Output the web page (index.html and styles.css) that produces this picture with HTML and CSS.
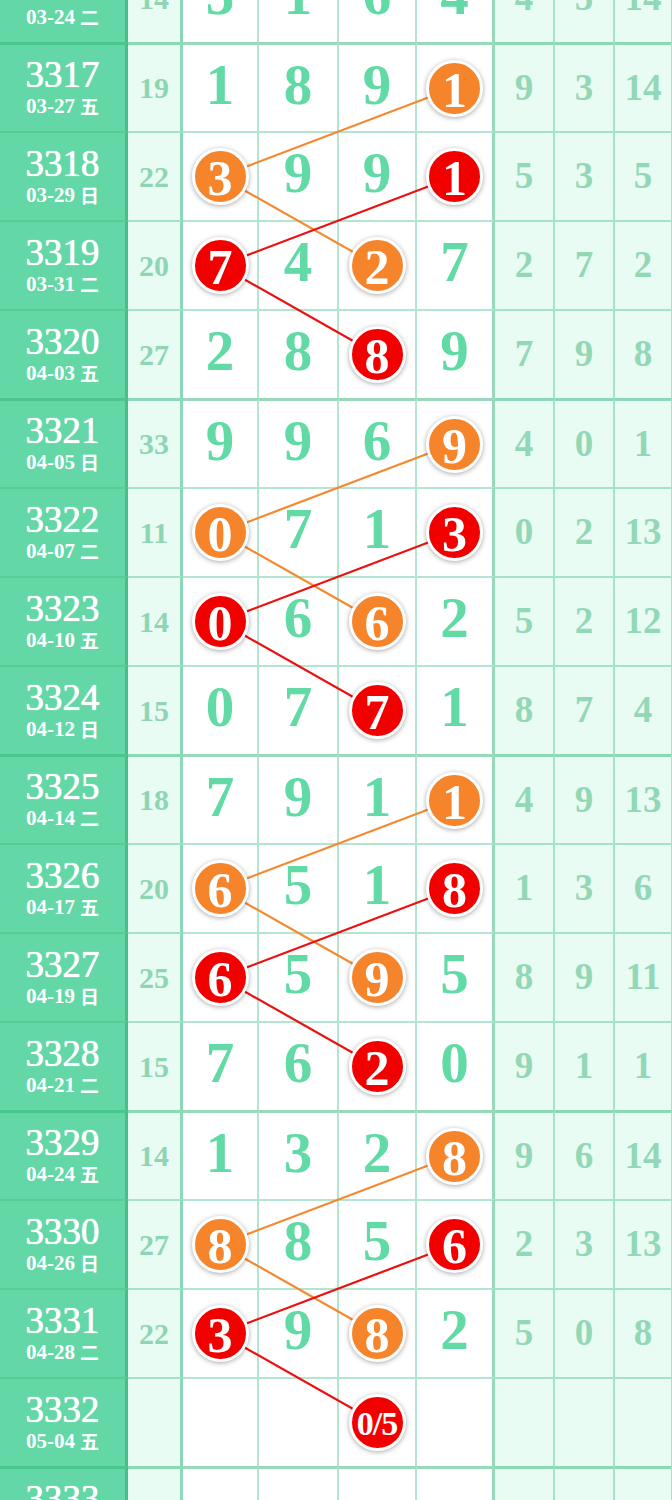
FILE: index.html
```html
<!DOCTYPE html>
<html lang="zh">
<head>
<meta charset="utf-8">
<title>走势图</title>
<link rel="stylesheet" href="styles.css">
</head>
<body>
<div class="chart">
  <svg class="links" width="672" height="1602" viewBox="0 0 672 1602">
    <polyline class="lo" points="454.5,134.5 220,223.5 377,312.5"/>
    <polyline class="lr" points="454.5,223.5 220,312.5 377,401.5"/>
    <polyline class="lo" points="454.5,490.5 220,579.5 377,668.5"/>
    <polyline class="lr" points="454.5,579.5 220,668.5 377,757.5"/>
    <polyline class="lo" points="454.5,846.5 220,935.5 377,1024.5"/>
    <polyline class="lr" points="454.5,935.5 220,1024.5 377,1113.5"/>
    <polyline class="lo" points="454.5,1202.5 220,1291.5 377,1380.5"/>
    <polyline class="lr" points="454.5,1291.5 220,1380.5 377,1469.5"/>
  </svg>

  <div class="row">
    <div class="c iss"><div class="no">3316</div><div class="dt">03-24 <span class="wk">二</span></div></div>
    <div class="c sum">14</div>
    <div class="c d">3</div><div class="c d">1</div><div class="c d">6</div><div class="c d last">4</div>
    <div class="c r">4</div><div class="c r">5</div><div class="c r">14</div>
  </div>

  <div class="row thick">
    <div class="c iss"><div class="no">3317</div><div class="dt">03-27 <span class="wk">五</span></div></div>
    <div class="c sum">19</div>
    <div class="c d">1</div><div class="c d">8</div><div class="c d">9</div><div class="c d last"><span class="ball o">1</span></div>
    <div class="c r">9</div><div class="c r">3</div><div class="c r">14</div>
  </div>
  <div class="row">
    <div class="c iss"><div class="no">3318</div><div class="dt">03-29 <span class="wk">日</span></div></div>
    <div class="c sum">22</div>
    <div class="c d"><span class="ball o">3</span></div><div class="c d">9</div><div class="c d">9</div><div class="c d last"><span class="ball red">1</span></div>
    <div class="c r">5</div><div class="c r">3</div><div class="c r">5</div>
  </div>
  <div class="row">
    <div class="c iss"><div class="no">3319</div><div class="dt">03-31 <span class="wk">二</span></div></div>
    <div class="c sum">20</div>
    <div class="c d"><span class="ball red">7</span></div><div class="c d">4</div><div class="c d"><span class="ball o">2</span></div><div class="c d last">7</div>
    <div class="c r">2</div><div class="c r">7</div><div class="c r">2</div>
  </div>
  <div class="row">
    <div class="c iss"><div class="no">3320</div><div class="dt">04-03 <span class="wk">五</span></div></div>
    <div class="c sum">27</div>
    <div class="c d">2</div><div class="c d">8</div><div class="c d"><span class="ball red">8</span></div><div class="c d last">9</div>
    <div class="c r">7</div><div class="c r">9</div><div class="c r">8</div>
  </div>

  <div class="row thick">
    <div class="c iss"><div class="no">3321</div><div class="dt">04-05 <span class="wk">日</span></div></div>
    <div class="c sum">33</div>
    <div class="c d">9</div><div class="c d">9</div><div class="c d">6</div><div class="c d last"><span class="ball o">9</span></div>
    <div class="c r">4</div><div class="c r">0</div><div class="c r">1</div>
  </div>
  <div class="row">
    <div class="c iss"><div class="no">3322</div><div class="dt">04-07 <span class="wk">二</span></div></div>
    <div class="c sum">11</div>
    <div class="c d"><span class="ball o">0</span></div><div class="c d">7</div><div class="c d">1</div><div class="c d last"><span class="ball red">3</span></div>
    <div class="c r">0</div><div class="c r">2</div><div class="c r">13</div>
  </div>
  <div class="row">
    <div class="c iss"><div class="no">3323</div><div class="dt">04-10 <span class="wk">五</span></div></div>
    <div class="c sum">14</div>
    <div class="c d"><span class="ball red">0</span></div><div class="c d">6</div><div class="c d"><span class="ball o">6</span></div><div class="c d last">2</div>
    <div class="c r">5</div><div class="c r">2</div><div class="c r">12</div>
  </div>
  <div class="row">
    <div class="c iss"><div class="no">3324</div><div class="dt">04-12 <span class="wk">日</span></div></div>
    <div class="c sum">15</div>
    <div class="c d">0</div><div class="c d">7</div><div class="c d"><span class="ball red">7</span></div><div class="c d last">1</div>
    <div class="c r">8</div><div class="c r">7</div><div class="c r">4</div>
  </div>

  <div class="row thick">
    <div class="c iss"><div class="no">3325</div><div class="dt">04-14 <span class="wk">二</span></div></div>
    <div class="c sum">18</div>
    <div class="c d">7</div><div class="c d">9</div><div class="c d">1</div><div class="c d last"><span class="ball o">1</span></div>
    <div class="c r">4</div><div class="c r">9</div><div class="c r">13</div>
  </div>
  <div class="row">
    <div class="c iss"><div class="no">3326</div><div class="dt">04-17 <span class="wk">五</span></div></div>
    <div class="c sum">20</div>
    <div class="c d"><span class="ball o">6</span></div><div class="c d">5</div><div class="c d">1</div><div class="c d last"><span class="ball red">8</span></div>
    <div class="c r">1</div><div class="c r">3</div><div class="c r">6</div>
  </div>
  <div class="row">
    <div class="c iss"><div class="no">3327</div><div class="dt">04-19 <span class="wk">日</span></div></div>
    <div class="c sum">25</div>
    <div class="c d"><span class="ball red">6</span></div><div class="c d">5</div><div class="c d"><span class="ball o">9</span></div><div class="c d last">5</div>
    <div class="c r">8</div><div class="c r">9</div><div class="c r">11</div>
  </div>
  <div class="row">
    <div class="c iss"><div class="no">3328</div><div class="dt">04-21 <span class="wk">二</span></div></div>
    <div class="c sum">15</div>
    <div class="c d">7</div><div class="c d">6</div><div class="c d"><span class="ball red">2</span></div><div class="c d last">0</div>
    <div class="c r">9</div><div class="c r">1</div><div class="c r">1</div>
  </div>

  <div class="row thick">
    <div class="c iss"><div class="no">3329</div><div class="dt">04-24 <span class="wk">五</span></div></div>
    <div class="c sum">14</div>
    <div class="c d">1</div><div class="c d">3</div><div class="c d">2</div><div class="c d last"><span class="ball o">8</span></div>
    <div class="c r">9</div><div class="c r">6</div><div class="c r">14</div>
  </div>
  <div class="row">
    <div class="c iss"><div class="no">3330</div><div class="dt">04-26 <span class="wk">日</span></div></div>
    <div class="c sum">27</div>
    <div class="c d"><span class="ball o">8</span></div><div class="c d">8</div><div class="c d">5</div><div class="c d last"><span class="ball red">6</span></div>
    <div class="c r">2</div><div class="c r">3</div><div class="c r">13</div>
  </div>
  <div class="row">
    <div class="c iss"><div class="no">3331</div><div class="dt">04-28 <span class="wk">二</span></div></div>
    <div class="c sum">22</div>
    <div class="c d"><span class="ball red">3</span></div><div class="c d">9</div><div class="c d"><span class="ball o">8</span></div><div class="c d last">2</div>
    <div class="c r">5</div><div class="c r">0</div><div class="c r">8</div>
  </div>
  <div class="row">
    <div class="c iss"><div class="no">3332</div><div class="dt">05-04 <span class="wk">五</span></div></div>
    <div class="c sum"></div>
    <div class="c d"></div><div class="c d"></div><div class="c d"><span class="ball red small">0/5</span></div><div class="c d last"></div>
    <div class="c r"></div><div class="c r"></div><div class="c r"></div>
  </div>

  <div class="row thick">
    <div class="c iss"><div class="no">3333</div><div class="dt">05-06 <span class="wk">日</span></div></div>
    <div class="c sum"></div>
    <div class="c d"></div><div class="c d"></div><div class="c d"></div><div class="c d last"></div>
    <div class="c r"></div><div class="c r"></div><div class="c r"></div>
  </div>
</div>
</body>
</html>
```

FILE: styles.css
```css
html, body {
  margin: 0;
  padding: 0;
  background: #ffffff;
}

body {
  width: 672px;
  overflow: hidden;
  font-family: "Liberation Serif", "Noto Sans CJK SC", serif;
}

.chart {
  position: relative;
  width: 672px;
  margin-top: -47px;
}

.links {
  position: absolute;
  top: 0;
  left: 0;
  z-index: 1;
  pointer-events: none;
}

.links polyline {
  fill: none;
  stroke-width: 2.2;
  stroke-linecap: round;
  stroke-linejoin: round;
}

.links .lo { stroke: #f5892f; }
.links .lr { stroke: #ec1010; }

.row {
  display: grid;
  grid-template-columns: 128px 55px 76px 80px 78px 78px 60px 60px 57px;
  height: 89px;
}

.c {
  box-sizing: border-box;
  display: flex;
  align-items: center;
  justify-content: center;
  border-top: 2px solid rgba(64, 190, 134, 0.4);
  border-right: 2px solid rgba(64, 190, 134, 0.4);
  height: 89px;
}

.row.thick .c {
  border-top: 3px solid rgba(50, 180, 120, 0.5);
}

.iss {
  flex-direction: column;
  background: #63d8a6;
  color: #ffffff;
  border-right: 3px solid rgba(30, 140, 95, 0.35);
  padding-bottom: 2px;
}

.iss .no {
  font-size: 37px;
  line-height: 36px;
  text-shadow: 0 0 0.7px #ffffff, 0 0 0.7px #ffffff;
}

.iss .dt {
  display: flex;
  align-items: center;
  gap: 5px;
  font-size: 21px;
  font-weight: 700;
  line-height: 22px;
  height: 22px;
  margin-top: 2px;
}

.iss .wk {
  display: block;
  font-family: "Noto Sans CJK SC", sans-serif;
  font-weight: 700;
  font-size: 19px;
  line-height: 20px;
  height: 20px;
}

.sum {
  background: #e9fcf4;
  color: #8ed6b3;
  font-size: 30px;
  font-weight: 700;
  border-right: 3px solid rgba(50, 180, 120, 0.5);
}

.d {
  background: #ffffff;
  color: #62daa6;
  font-size: 57px;
  font-weight: 700;
  padding-bottom: 8px;
}

.d.last {
  border-right: 3px solid rgba(50, 180, 120, 0.5);
}

.r {
  background: #e8fcf3;
  color: #92d8b6;
  font-size: 37px;
  font-weight: 700;
  padding-bottom: 2px;
}

.r:last-child {
  border-right: 1px solid rgba(64, 190, 134, 0.4);
}

.ball {
  position: relative;
  z-index: 2;
  box-sizing: border-box;
  width: 57px;
  height: 57px;
  margin-top: 8px;
  border: 3px solid #ffffff;
  border-radius: 50%;
  display: flex;
  align-items: center;
  justify-content: center;
  color: #ffffff;
  font-size: 50px;
  font-weight: 700;
  line-height: 1;
  padding-top: 3px;
  box-shadow: 0 1px 5px rgba(0, 0, 0, 0.35);
}

.ball.o { background: #f5842b; }
.ball.red { background: #f20000; }

.ball.small {
  font-size: 34px;
  letter-spacing: -1px;
  padding-top: 2px;
}
```
